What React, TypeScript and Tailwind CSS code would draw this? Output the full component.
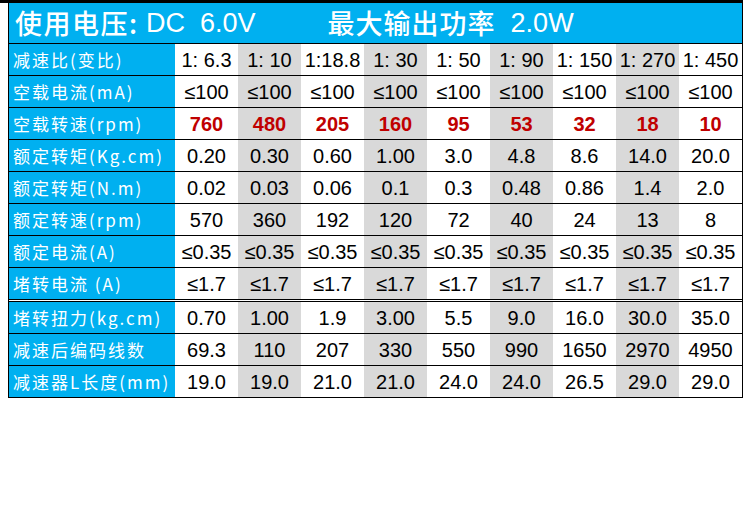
const labels = [
  '减速比(变比)',
  '空载电流(mA)',
  '空载转速(rpm)',
  '额定转矩(Kg.cm)',
  '额定转矩(N.m)',
  '额定转速(rpm)',
  '额定电流(A)',
  '堵转电流 (A)',
  '堵转扭力(kg.cm)',
  '减速后编码线数',
  '减速器L长度(mm)',
];

const rows: string[][] = [
  ['1: 6.3', '1: 10', '1:18.8', '1: 30', '1: 50', '1: 90', '1: 150', '1: 270', '1: 450'],
  Array(9).fill('≤100'),
  ['760', '480', '205', '160', '95', '53', '32', '18', '10'],
  ['0.20', '0.30', '0.60', '1.00', '3.0', '4.8', '8.6', '14.0', '20.0'],
  ['0.02', '0.03', '0.06', '0.1', '0.3', '0.48', '0.86', '1.4', '2.0'],
  ['570', '360', '192', '120', '72', '40', '24', '13', '8'],
  Array(9).fill('≤0.35'),
  Array(9).fill('≤1.7'),
  ['0.70', '1.00', '1.9', '3.00', '5.5', '9.0', '16.0', '30.0', '35.0'],
  ['69.3', '110', '207', '330', '550', '990', '1650', '2970', '4950'],
  ['19.0', '19.0', '21.0', '21.0', '24.0', '24.0', '26.5', '29.0', '29.0'],
];

const cjk = { fontFamily: '"Noto Sans CJK SC", "Noto Sans", sans-serif' };
const arial = { fontFamily: '"Liberation Sans", Arial, sans-serif' };

function Row({ index }: { index: number }) {
  const red = index === 2;
  return (
    <div className="flex h-[32px] border-b border-black">
      <div
        className="flex w-[166px] items-center bg-[#00b0f0] pl-[4px] text-[17px] tracking-[2px] text-white whitespace-pre"
        style={cjk}
      >
        {labels[index]}
      </div>
      {rows[index].map((v, i) => (
        <div
          key={i}
          className={`flex w-[63px] items-center justify-center whitespace-pre text-[20px] ${
            i % 2 === 1 ? 'bg-[#d9d9d9]' : 'bg-white'
          } ${red ? 'font-bold text-[#c00000]' : 'text-black'}`}
          style={arial}
        >
          {v}
        </div>
      ))}
    </div>
  );
}

export default function App() {
  return (
    <div className="h-[529px] w-[750px] bg-white">
      <div className="h-[3px] w-[743px] bg-black" />
      <div className="ml-[8px] w-[735px] border-x border-black">
        <div
          className="flex h-[41px] items-center border-b border-black bg-[#00b0f0] pl-[6px] text-[27px] font-medium text-white whitespace-pre"
          style={cjk}
        >
          <span className="tracking-[1.5px]">使用电压:</span>
          <span style={arial} className="font-normal">{' DC  6.0V'}</span>
          <span className="ml-[72px] tracking-[1px]">最大输出功率</span>
          <span style={arial} className="font-normal">{'  2.0W'}</span>
        </div>
        {[0, 1, 2, 3, 4, 5, 6, 7].map((i) => (
          <Row key={i} index={i} />
        ))}
        <div className="h-[2px] bg-white border-b border-black" />
        {[8, 9, 10].map((i) => (
          <Row key={i} index={i} />
        ))}
      </div>
    </div>
  );
}
